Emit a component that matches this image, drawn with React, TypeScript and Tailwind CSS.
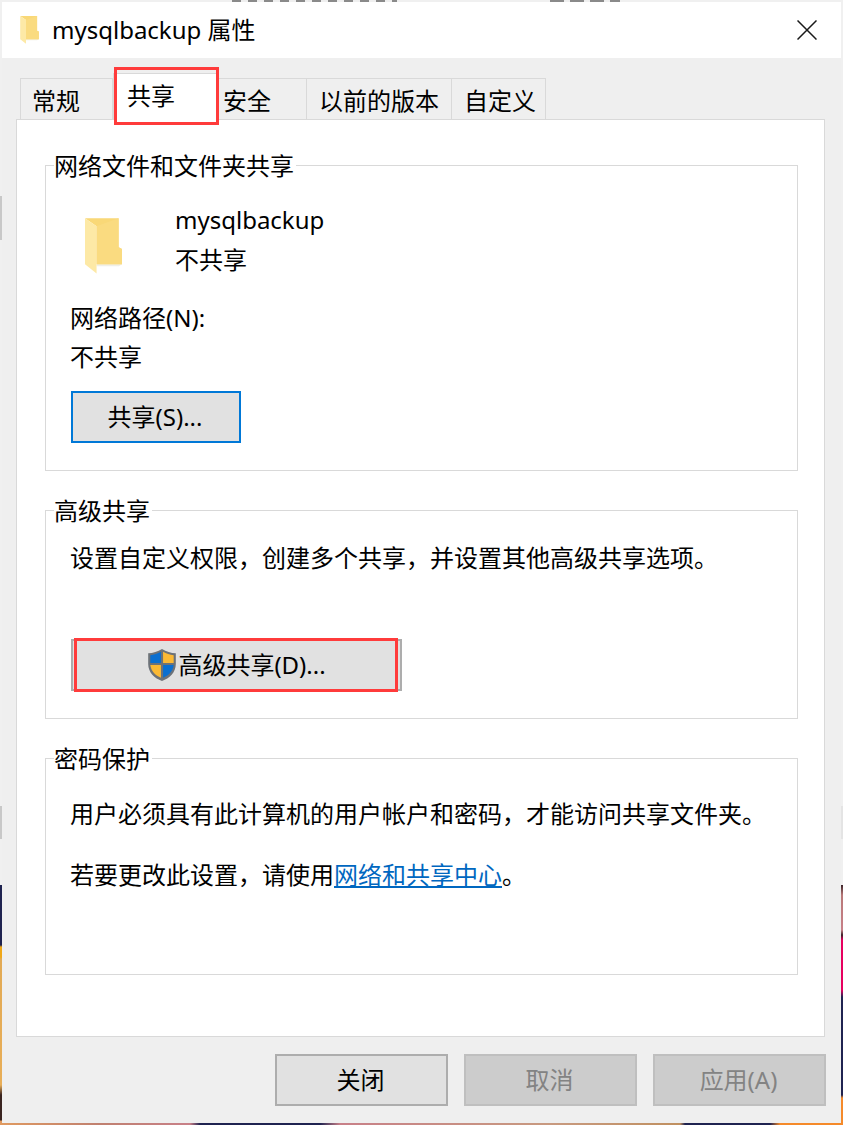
const FONT = "font-['Noto_Sans','Noto_Sans_CJK_SC',sans-serif]";

function FolderIcon({ className }: { className: string }) {
  return (
    <svg viewBox="0 0 109 170" className={className}>
      <polygon points="34,136 109,136 100,142 34,142" fill="#efefe8" />
      <polygon points="0,0 99,0 99,86 109,91 109,136 34,136 34,24" fill="#f9d877" />
      <polygon points="34,24 99,0 99,86 109,91 109,136 34,136" fill="#fadb80" />
      <polygon points="0,0 34,24 34,163 0,136" fill="#fde9a6" />
    </svg>
  );
}

function ShieldIcon() {
  return (
    <svg viewBox="0 0 28 32" className="w-[30px] h-[34px] shrink-0">
      <path d="M14 1 C10 3.5 5.5 5 1 5 V15 C1 23 7 28.5 14 31 C21 28.5 27 23 27 15 V5 C22.5 5 18 3.5 14 1 Z" fill="#6d7278" />
      <path d="M13 3.5 C10 5.2 6.5 6.5 3 6.8 V14 H13 Z" fill="#0a6fd0" />
      <path d="M15 3.5 C18 5.2 21.5 6.5 25 6.8 V14 H15 Z" fill="#fbb934" />
      <path d="M3 16 H13 V28 C8 26 3.8 22 3 16 Z" fill="#fbb934" />
      <path d="M25 16 H15 V28 C20 26 24.2 22 25 16 Z" fill="#0a6fd0" />
    </svg>
  );
}

function Group({ title, className, children }: { title: string; className: string; children: React.ReactNode }) {
  return (
    <div className={`relative border border-[#d9d9d9] pl-[24px] ${className}`}>
      <span className="absolute left-[8px] top-[-16px] bg-white pr-[2px] h-[32px] leading-[32px]">{title}</span>
      {children}
    </div>
  );
}

function Footer({ label, disabled }: { label: string; disabled?: boolean }) {
  return (
    <button
      className={`w-[173px] h-[52px] border-2 pr-[2px] ${
        disabled ? "bg-[#cccccc] border-[#bfbfbf] text-[#838383]" : "bg-[#e1e1e1] border-[#adadad] text-black"
      }`}
    >
      {label}
    </button>
  );
}

export default function App() {
  const tabs = [
    { label: "常规", cls: "w-[93px] pl-[11px]" },
    { label: "共享", cls: "w-[105px] pl-[13px]", active: true },
    { label: "安全", cls: "w-[89px] pl-[5px]" },
    { label: "以前的版本", cls: "w-[145px] pl-[12px]" },
    { label: "自定义", cls: "w-[94px] pl-[12px]" },
  ];

  return (
    <div className={`relative w-[843px] h-[1125px] overflow-hidden bg-[#f0f0f0] p-[2px] text-[24px] text-black ${FONT}`}>
      {/* desktop showing round the window */}
      <div className="absolute left-[232px] top-0 w-[165px] h-[2px] bg-[repeating-linear-gradient(90deg,#8a8a8a_0_9px,#efefef_9px_16px)]" />
      <div className="absolute left-[550px] top-0 w-[70px] h-[2px] bg-[repeating-linear-gradient(90deg,#8a8a8a_0_14px,#efefef_14px_20px)]" />
      <div className="absolute left-0 top-[196px] w-[2px] h-[44px] bg-[#c8c8c8]" />
      <div className="absolute left-0 top-[806px] w-[2px] h-[33px] bg-[#c8c8c8]" />
      <div className="absolute right-0 top-[806px] w-[2px] h-[33px] bg-[#e4e4e4]" />
      <div className="absolute left-0 top-[885px] w-[2px] h-[240px] bg-[linear-gradient(180deg,#1f2350_0,#1f2350_60px,#f0a818_62px,#f0a818_72px,#e2aa55_74px,#e8ae58_200px,#3a2420_210px,#3a2420_235px,#e09a60_236px)]" />
      <div className="absolute right-0 top-[885px] w-[2px] h-[240px] bg-[linear-gradient(180deg,#3a2228_0,#b87878_10px,#c88088_45px,#3a2228_50px,#e6005f_55px,#e6005f_105px,#1f2350_112px,#1f2350_210px,#f58a2a_213px)]" />
      <div className="absolute left-0 bottom-0 w-[843px] h-[2px] bg-[linear-gradient(90deg,#e09a60_0,#c08070_100px,#c88088_190px,#1f2350_200px,#1f2350_320px,#c88088_340px,#c89a80_550px,#c09060_680px,#1f2350_685px,#1f2350_770px,#f58a2a_780px)]" />

      <div className="relative h-full flex flex-col bg-[#efefef]">
        <div className="h-[56px] shrink-0 bg-white flex items-center pl-[18px] pr-[24px]">
          <FolderIcon className="w-[19px] h-[29px] mt-[1px]" />
          <span className="ml-[13px] flex-1 leading-none">mysqlbackup 属性</span>
          <svg viewBox="0 0 20 20" className="w-[20px] h-[20px]" fill="none" stroke="#1a1a1a" strokeWidth="1.5">
            <path d="M0.5 0.5 L19.5 19.5 M19.5 0.5 L0.5 19.5" />
          </svg>
        </div>

        <div className="h-[61px] shrink-0 flex items-end pl-[18px]">
          {tabs.map((tab) =>
            tab.active ? (
              <div key={tab.label} className={`relative z-10 h-[47px] -mb-px bg-white border-x border-t border-[#d9d9d9] leading-[44px] ${tab.cls}`}>
                {tab.label}
              </div>
            ) : (
              <div key={tab.label} className={`h-[41px] border-r border-t border-[#d9d9d9] first:border-l leading-[43px] ${tab.cls}`}>
                {tab.label}
              </div>
            )
          )}
        </div>

        <div className="h-[918px] shrink-0 ml-[14px] mr-[16px] bg-white border border-[#d9d9d9] pl-[28px] pr-[26px] pt-[45px] flex flex-col gap-[39px]">
          <Group title="网络文件和文件夹共享" className="h-[306px] pt-[36px]">
            <div className="flex h-[78px]">
              <div className="w-[105px] pl-[15px] pt-[16px]">
                <FolderIcon className="w-[37px] h-[58px]" />
              </div>
              <div className="leading-[39px] -mt-[1px]">
                <div className="-mb-[1px] -translate-y-[1px]">mysqlbackup</div>
                <div className="mt-[1px]">不共享</div>
              </div>
            </div>
            <div className="mt-[19px] leading-[38px]">网络路径(N):</div>
            <div className="mt-[1px] leading-[38px]">不共享</div>
            <button className="ml-[1px] mt-[15px] w-[170px] h-[52px] pr-[2px] bg-[#e1e1e1] border-2 border-[#0078d7]">共享(S)...</button>
          </Group>

          <Group title="高级共享" className="h-[209px] pt-[28px]">
            <div className="leading-[38px]">设置自定义权限，创建多个共享，并设置其他高级共享选项。</div>
            <button className="ml-[1px] mt-[62px] w-[331px] h-[52px] bg-[#e1e1e1] border-2 border-[#adadad] flex items-center justify-center gap-[1px]">
              <ShieldIcon />
              <span>高级共享(D)...</span>
            </button>
          </Group>

          <Group title="密码保护" className="h-[217px] pt-[36px]">
            <div className="leading-[38px]">用户必须具有此计算机的用户帐户和密码，才能访问共享文件夹。</div>
            <div className="mt-[23px] leading-[38px]">
              若要更改此设置，请使用<span className="text-[#0067c0] underline">网络和共享中心</span>。
            </div>
          </Group>
        </div>

        <div className="flex justify-end gap-[16px] pt-[17px] pr-[15px]">
          <Footer label="关闭" />
          <Footer label="取消" disabled />
          <Footer label="应用(A)" disabled />
        </div>

        {/* red annotation boxes drawn over the screenshot */}
        <div className="absolute z-20 left-[112px] top-[65px] w-[105px] h-[58px] border-[3px] border-[#ff3b3b]" />
        <div className="absolute z-20 left-[72px] top-[636px] w-[324px] h-[54px] border-[3px] border-[#ff3b3b]" />
      </div>
    </div>
  );
}
